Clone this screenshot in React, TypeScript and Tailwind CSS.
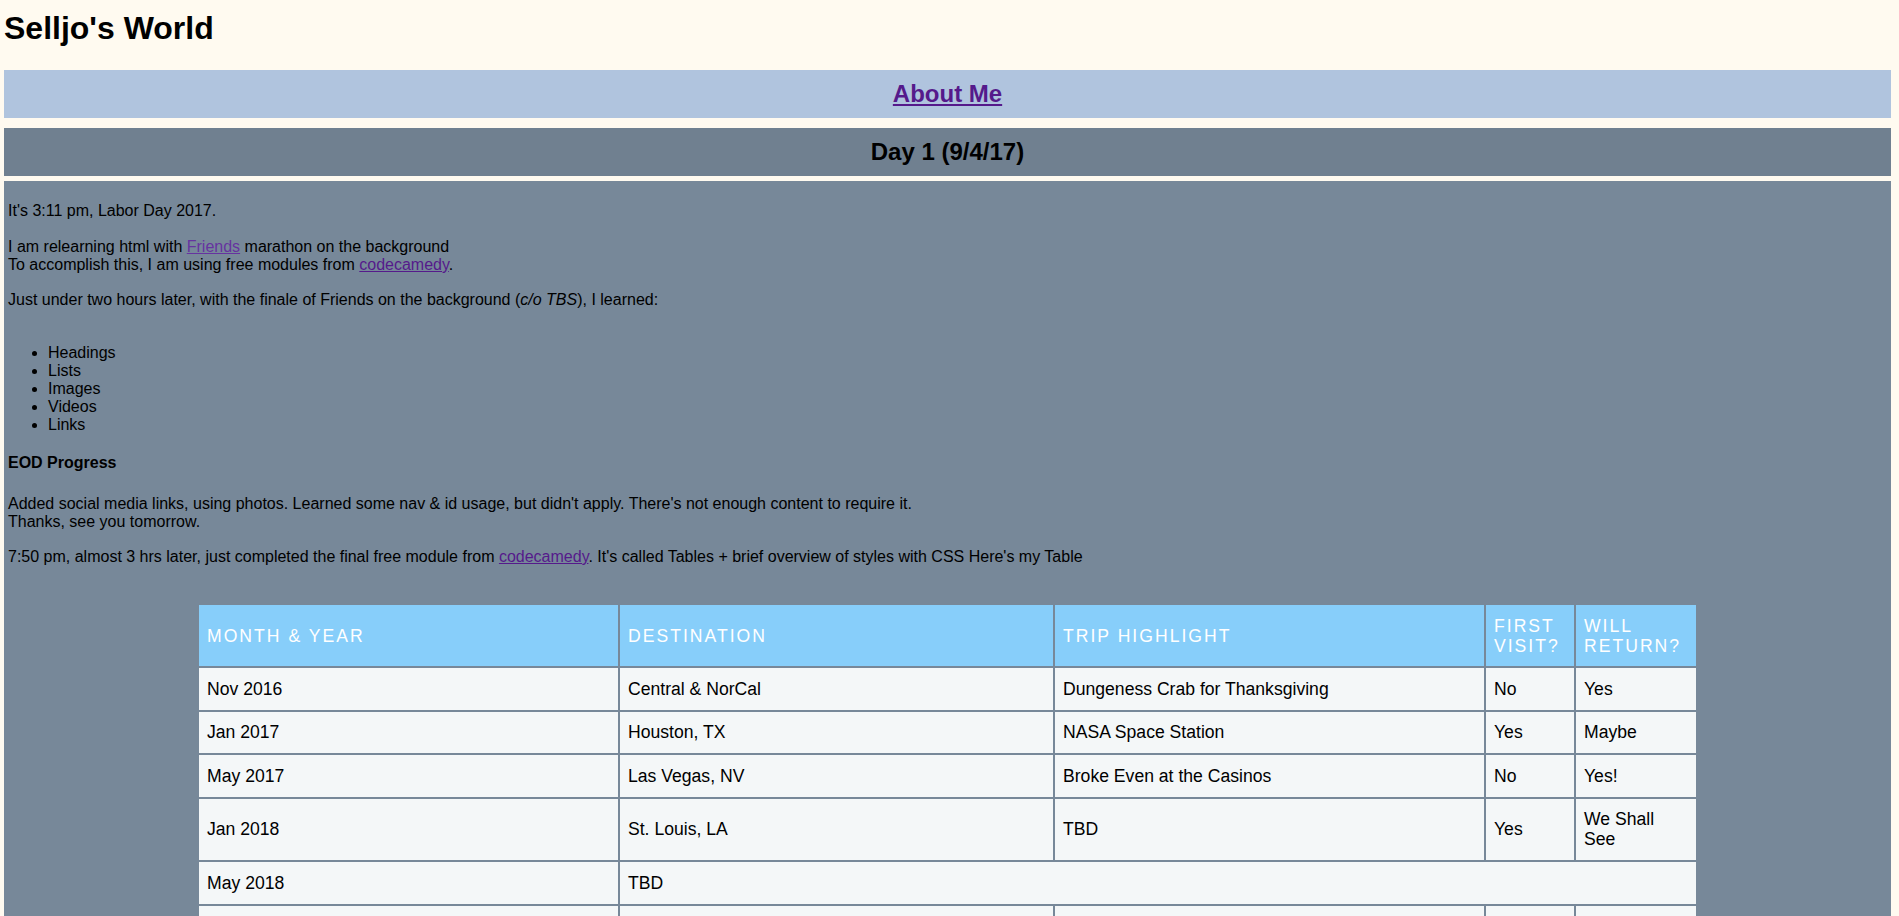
import React from 'react';

const rows = [
  { date: 'Nov 2016', dest: 'Central & NorCal', trip: 'Dungeness Crab for Thanksgiving', first: 'No', back: 'Yes' },
  { date: 'Jan 2017', dest: 'Houston, TX', trip: 'NASA Space Station', first: 'Yes', back: 'Maybe' },
  { date: 'May 2017', dest: 'Las Vegas, NV', trip: 'Broke Even at the Casinos', first: 'No', back: 'Yes!' },
  { date: 'Jan 2018', dest: 'St. Louis, LA', trip: 'TBD', first: 'Yes', back: 'We Shall See' },
];

const th = 'border-2 border-[#778899] px-[8px] py-[10.5px] leading-[20px] text-left font-normal uppercase tracking-[2px] text-white align-middle';
const td = 'border-2 border-[#778899] px-[8px] py-[10.75px] leading-[20px] text-left align-middle';

export default function App() {
  return (
    <div className="min-h-screen bg-[#fffaf0] pl-[4px] pr-[8px] pt-[10px] text-black font-['Liberation_Sans',Arial,sans-serif]">
      {/* Title */}
      <h1 className="mb-[23px] text-[32px] font-bold leading-[37px]">Selljo's World</h1>

      {/* Nav */}
      <nav className="flex h-[48px] items-center justify-center bg-[#b0c4de]">
        <a href="#" className="text-[24px] font-bold leading-[28px] text-[#551a8b] underline">
          About Me
        </a>
      </nav>

      {/* Day heading */}
      <div className="mt-[10px] flex h-[48px] items-center justify-center bg-[#708090]">
        <h2 className="text-[24px] font-bold leading-[28px]">Day 1 (9/4/17)</h2>
      </div>

      {/* Entry */}
      <section className="mt-[5px] bg-[#778899] px-[4px] pt-[4px] pb-[40px] text-[16px] leading-[18px]">
        <p className="mt-[17px]">It's 3:11 pm, Labor Day 2017.</p>
        <p className="mt-[18px]">
          I am relearning html with{' '}
          <a href="#" className="text-[#6633a0] underline">Friends</a> marathon on the background
          <br />
          To accomplish this, I am using free modules from{' '}
          <a href="#" className="text-[#551a8b] underline">codecamedy</a>.
        </p>
        <p className="mt-[17px]">
          Just under two hours later, with the finale of Friends on the background (<em>c/o TBS</em>), I learned:
        </p>
        <ul className="mt-[35px] list-disc pl-[40px]">
          <li>Headings</li>
          <li>Lists</li>
          <li>Images</li>
          <li>Videos</li>
          <li>Links</li>
        </ul>
        <h4 className="mt-[20px] font-bold">EOD Progress</h4>
        <p className="mt-[23px]">
          Added social media links, using photos. Learned some nav &amp; id usage, but didn't apply. There's not enough content to require it.
          <br />
          Thanks, see you tomorrow.
        </p>
        <p className="mt-[17px]">
          7:50 pm, almost 3 hrs later, just completed the final free module from{' '}
          <a href="#" className="text-[#551a8b] underline">codecamedy</a>. It's called Tables + brief overview of styles with CSS Here's my Table
        </p>

        <table className="mx-auto mt-[37px] w-[1499px] table-fixed border-collapse text-[17.6px]">
          <colgroup>
            <col className="w-[421px]" />
            <col className="w-[435px]" />
            <col className="w-[431px]" />
            <col className="w-[90px]" />
            <col className="w-[122px]" />
          </colgroup>
          <thead className="bg-[#87cefa]">
            <tr>
              <th className={th}>Month &amp; Year</th>
              <th className={th}>Destination</th>
              <th className={th}>Trip Highlight</th>
              <th className={th}>First Visit?</th>
              <th className={th}>Will Return?</th>
            </tr>
          </thead>
          <tbody className="bg-[#f4f7f8]">
            {rows.map((r) => (
              <tr key={r.date + r.dest}>
                <td className={td}>{r.date}</td>
                <td className={td}>{r.dest}</td>
                <td className={td}>{r.trip}</td>
                <td className={td}>{r.first}</td>
                <td className={td}>{r.back}</td>
              </tr>
            ))}
            <tr>
              <td className={td}>May 2018</td>
              <td className={td} colSpan={4}>TBD</td>
            </tr>
            <tr>
              <td className={td}>&nbsp;</td>
              <td className={td}>&nbsp;</td>
              <td className={td}>&nbsp;</td>
              <td className={td}>&nbsp;</td>
              <td className={td}>&nbsp;</td>
            </tr>
          </tbody>
        </table>
      </section>
    </div>
  );
}
